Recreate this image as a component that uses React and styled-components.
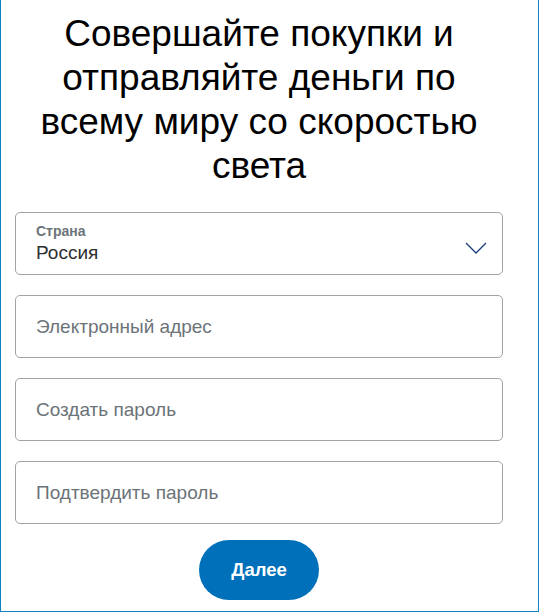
import styled, { createGlobalStyle } from "styled-components";

const GlobalStyle = createGlobalStyle`
  html, body {
    margin: 0;
    padding: 0;
    background: #fff;
  }
  body {
    font-family: "Liberation Sans", Arial, sans-serif;
  }
`;

const Frame = styled.div`
  box-sizing: border-box;
  width: 539px;
  height: 612px;
  border: 1px solid #0f83c7;
  border-top: none;
  padding: 0 35px 0 14px;
  overflow: hidden;
`;

const Title = styled.h1`
  margin: 0;
  padding-top: 12px;
  font-size: 37px;
  line-height: 44px;
  font-weight: 400;
  color: #000;
  text-align: center;
`;

const Form = styled.form`
  margin-top: 24px;
  display: flex;
  flex-direction: column;
  gap: 20px;
`;

const Field = styled.div`
  box-sizing: border-box;
  position: relative;
  height: 63px;
  border: 1px solid #9da3a6;
  border-radius: 5px;
  padding: 0 20px;
  display: flex;
  flex-direction: column;
  justify-content: center;
`;

const Label = styled.span`
  font-size: 14px;
  font-weight: 700;
  color: #6c7378;
  line-height: 16px;
  margin-top: 1px;
`;

const Value = styled.span`
  font-size: 19px;
  color: #2c2e2f;
  line-height: 24px;
  margin-top: 2px;
`;

const Placeholder = styled.span`
  font-size: 19px;
  color: #6c7378;
  line-height: 22px;
`;

const Chevron = styled.svg`
  position: absolute;
  right: 15px;
  top: 29px;
`;

const Actions = styled.div`
  display: flex;
  justify-content: center;
  margin-top: 16px;
`;

const Button = styled.button`
  width: 120px;
  height: 60px;
  border: none;
  border-radius: 30px;
  background: #0070ba;
  color: #fff;
  font-family: "Liberation Sans", Arial, sans-serif;
  font-size: 18.5px;
  font-weight: 700;
`;

const App = () => {
  return (
    <>
      <GlobalStyle />
      <Frame>
        <Title>
          Совершайте покупки и отправляйте деньги по всему миру со скоростью
          света
        </Title>
        <Form>
          <Field>
            <Label>Страна</Label>
            <Value>Россия</Value>
            <Chevron width="22" height="12" viewBox="0 0 22 12">
              <path d="M1 1l10 10L21 1" fill="none" stroke="#1a3d7a" strokeWidth="1.3" />
            </Chevron>
          </Field>
          <Field>
            <Placeholder>Электронный адрес</Placeholder>
          </Field>
          <Field>
            <Placeholder>Создать пароль</Placeholder>
          </Field>
          <Field>
            <Placeholder>Подтвердить пароль</Placeholder>
          </Field>
        </Form>
        <Actions>
          <Button type="button">Далее</Button>
        </Actions>
      </Frame>
    </>
  );
};

export default App;
